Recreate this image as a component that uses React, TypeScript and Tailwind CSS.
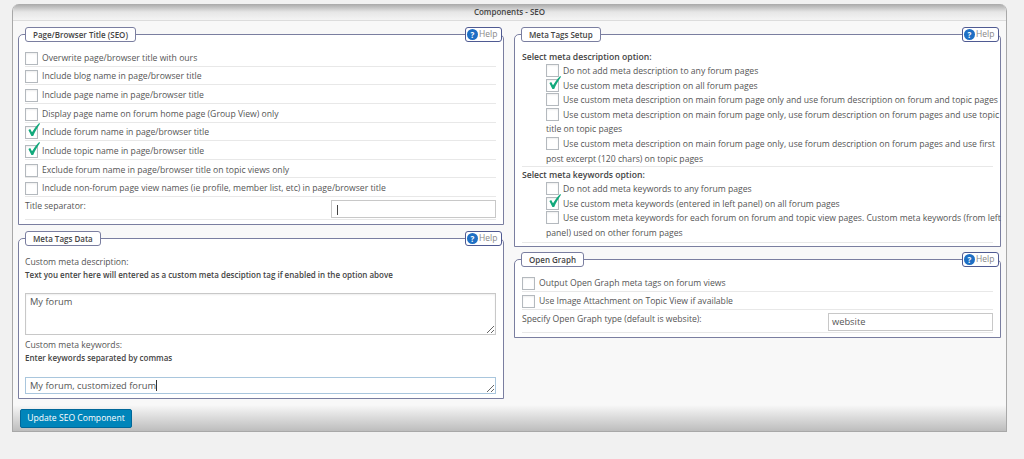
import React from "react";

const CheckMark = () => (
  <svg viewBox="0 0 12 13" className="absolute left-[2px] top-[-4px] h-[13px] w-[12px]">
    <path d="M0.4 7 L2.2 6 L4 9.3 C6 6 8.2 3 11.2 0 L12 0.8 C9.5 4.5 7 8.8 5.2 13 L3.4 13 Z" fill="#12a97c" />
  </svg>
);

const Checkbox = ({ checked, className }: { checked?: boolean; className?: string }) => (
  <span className={`relative inline-block h-[13px] w-[13px] shrink-0 border border-[#b4b9be] bg-white shadow-[inset_0_1px_2px_rgba(0,0,0,0.07)] ${className ?? ""}`}>
    {checked && <CheckMark />}
  </span>
);

const HelpIcon = () => (
  <span className="flex h-[11px] w-[11px] items-center justify-center rounded-full bg-[#1e6fc4] text-[8px] font-bold leading-none text-white">
    ?
  </span>
);

const Fieldset = ({
  title,
  className,
  children,
}: {
  title: string;
  className?: string;
  children: React.ReactNode;
}) => (
  <section className={`relative rounded-tl-[5px] rounded-tr-[5px] border border-[#7a7ea0] bg-white ${className}`}>
    <div className="absolute left-[6px] top-[-8px] flex h-[15px] items-center rounded-[3px] border border-[#7a7ea0] bg-white px-[7px] text-[8px] font-semibold text-[#444]">
      {title}
    </div>
    <div className="absolute right-[1px] top-[-8px] flex h-[15px] w-[37px] items-center gap-[1px] rounded-[3px] border border-[#4f5a92] bg-white pl-[1px] text-[8.5px] text-[#888]">
      <HelpIcon />
      Help
    </div>
    {children}
  </section>
);

const OptionRow = ({ label, checked }: { label: string; checked?: boolean }) => (
  <div className="flex h-[18.65px] items-center gap-[4px] border-b border-[#e8e8e8] pt-[3px]">
    <Checkbox checked={checked} />
    <span>{label}</span>
  </div>
);

const WrapOption = ({ label, checked }: { label: string; checked?: boolean }) => (
  <div className="leading-[14.6px]">
    <Checkbox checked={checked} className="mr-[4px] align-top" />
    {label}
  </div>
);

const titleOptions = [
  { label: "Overwrite page/browser title with ours" },
  { label: "Include blog name in page/browser title" },
  { label: "Include page name in page/browser title" },
  { label: "Display page name on forum home page (Group View) only" },
  { label: "Include forum name in page/browser title", checked: true },
  { label: "Include topic name in page/browser title", checked: true },
  { label: "Exclude forum name in page/browser title on topic views only" },
  { label: "Include non-forum page view names (ie profile, member list, etc) in page/browser title" },
];

const descriptionOptions = [
  { label: "Do not add meta description to any forum pages" },
  { label: "Use custom meta description on all forum pages", checked: true },
  { label: "Use custom meta description on main forum page only and use forum description on forum and topic pages" },
  { label: "Use custom meta description on main forum page only, use forum description on forum pages and use topic title on topic pages" },
  { label: "Use custom meta description on main forum page only, use forum description on forum pages and use first post excerpt (120 chars) on topic pages" },
];

const keywordOptions = [
  { label: "Do not add meta keywords to any forum pages" },
  { label: "Use custom meta keywords (entered in left panel) on all forum pages", checked: true },
  { label: "Use custom meta keywords for each forum on forum and topic view pages. Custom meta keywords (from left panel) used on other forum pages" },
];

export default function App() {
  return (
    <div className="h-[459px] overflow-hidden bg-[#f1f1f1] pl-[12px] pt-[4px] font-['Open_Sans',sans-serif] text-[8.65px] text-[#555]">
      <div className="w-[995px] overflow-hidden rounded-t-[7px] border border-t-0 border-[#a8a8a8] bg-[#f8f8f8]">
        <div className="flex h-[17px] items-center justify-center border-b border-[#dcdcdc] bg-gradient-to-b from-[#a9a9a9] via-[#e6e6e6] to-[#f4f4f4] text-[8px] font-semibold text-[#444]">
          Components - SEO
        </div>

        <div className="flex items-start gap-[10px] pl-[5px] pt-[13px]">
          <div className="flex w-[486px] flex-col gap-[13px]">
            <Fieldset title="Page/Browser Title (SEO)" className="h-[191px] pl-[6px] pr-[7px] pt-[13px]">
              {titleOptions.map((o) => (
                <OptionRow key={o.label} label={o.label} checked={o.checked} />
              ))}
              <div className="flex h-[23px] items-start justify-between border-b border-[#e8e8e8] pt-[3px]">
                <span className="leading-[12px]">Title separator:</span>
                <div className="relative h-[18px] w-[165px] border border-[#c8c8c8] bg-white">
                  <span className="absolute left-[5px] top-[4px] h-[10px] w-px bg-[#444]" />
                </div>
              </div>
            </Fieldset>

            <Fieldset title="Meta Tags Data" className="h-[161px] pl-[6px] pr-[7px] pt-[16px]">
              <div className="leading-[14px]">Custom meta description:</div>
              <div className="text-[8px] font-semibold leading-[12px] text-[#444]">
                Text you enter here will entered as a custom meta desciption tag if enabled in the option above
              </div>
              <textarea
                readOnly
                value="My forum"
                className="mt-[12px] block h-[42px] w-full border border-[#c8c8c8] bg-white px-[4px] py-[1px] text-[9.3px] leading-[14px] text-[#555] shadow-[inset_0_1px_2px_rgba(0,0,0,0.07)] outline-none"
              />
              <div className="mt-[3px] leading-[14px]">Custom meta keywords:</div>
              <div className="text-[8px] font-semibold leading-[12px] text-[#444]">
                Enter keywords separated by commas
              </div>
              <div className="relative mt-[13px]">
                <textarea
                  readOnly
                  value="My forum, customized forum"
                  className="block h-[17px] w-full border border-[#a9c6dd] bg-white px-[4px] py-[1px] text-[9.3px] leading-[14px] text-[#555] outline-none"
                />
                <span className="absolute left-[131px] top-[3px] h-[11px] w-px bg-[#333]" />
              </div>
            </Fieldset>
          </div>

          <div className="flex w-[487px] flex-col gap-[12px]">
            <Fieldset title="Meta Tags Setup" className="h-[213px] px-[7px] pt-[15px]">
              <div className="font-semibold leading-[14px] text-[#444]">Select meta description option:</div>
              <div className="mr-[-12px] pl-[24px]">
                {descriptionOptions.map((o) => (
                  <WrapOption key={o.label} label={o.label} checked={o.checked} />
                ))}
              </div>
              <div className="border-t border-[#e8e8e8] pt-[2px]">
                <div className="font-semibold leading-[13px] text-[#444]">Select meta keywords option:</div>
                <div className="mr-[-12px] pl-[24px]">
                  {keywordOptions.map((o) => (
                    <WrapOption key={o.label} label={o.label} checked={o.checked} />
                  ))}
                </div>
              </div>
              <div className="mt-[1px] border-t border-[#e8e8e8]" />
            </Fieldset>

            <Fieldset title="Open Graph" className="h-[79px] px-[7px] pt-[13px]">
              <OptionRow label="Output Open Graph meta tags on forum views" />
              <OptionRow label="Use Image Attachment on Topic View if available" />
              <div className="flex h-[23px] items-start justify-between border-b border-[#e8e8e8] pt-[3px]">
                <span className="leading-[12px]">Specify Open Graph type (default is website):</span>
                <div className="flex h-[18px] w-[165px] items-center border border-[#c8c8c8] bg-white pl-[3px] text-[9.3px]">
                  website
                </div>
              </div>
            </Fieldset>
          </div>
        </div>

        <div className="mt-[6px] h-[26px] bg-gradient-to-b from-[#f8f8f8] to-[#bdbdbd] pl-[7px] pt-[4px]">
          <button className="h-[19px] w-[112px] rounded-[2px] border border-[#006799] bg-[#0085ba] text-[8.6px] text-white">
            Update SEO Component
          </button>
        </div>
      </div>
    </div>
  );
}
